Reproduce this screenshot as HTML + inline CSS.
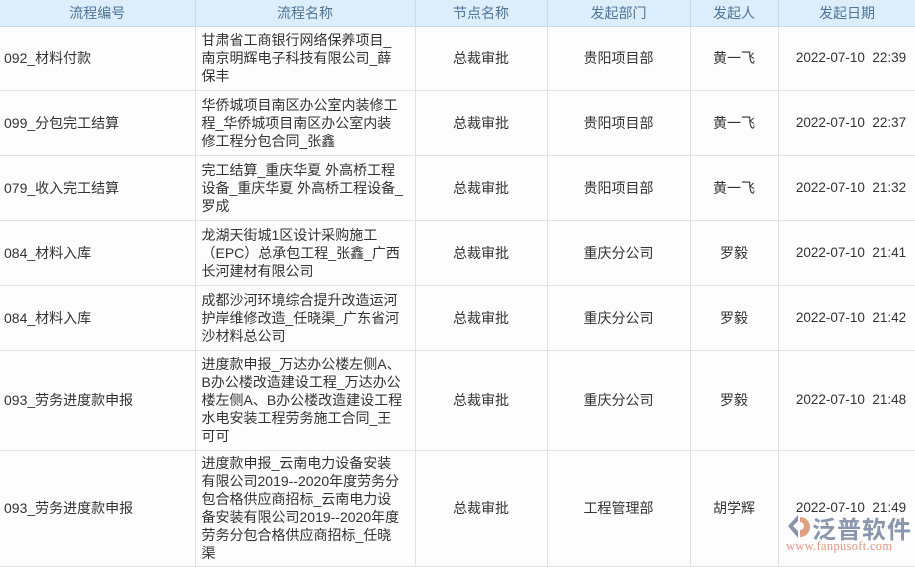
<!DOCTYPE html>
<html><head><meta charset="utf-8"><style>
*{margin:0;padding:0;box-sizing:border-box}
body{width:915px;height:561px;overflow:hidden;background:#fdfdfd;font-family:"Liberation Sans","Noto Sans CJK SC",sans-serif;font-size:14px;color:#333;position:relative}
table{border-collapse:collapse;table-layout:fixed;position:absolute;left:0;top:0;width:916px}
th{height:26px;background:#dcedfb;color:#4e7497;font-weight:normal;border-right:1px solid #c5dbef;border-bottom:1px solid #c5dbef;text-align:center;font-size:14px}
td{border-right:1px solid #e2e2e2;border-bottom:1px solid #e2e2e2;text-align:center;line-height:18px;vertical-align:middle;white-space:nowrap}
td.l{text-align:left;padding-left:4px}
td.n{text-align:left;padding:0 6px}
td.d{font-size:13.5px;padding-left:8px}
.logo{position:absolute;left:786px;top:514px}
</style></head><body>
<table>
<colgroup><col style="width:195px"><col style="width:220px"><col style="width:132px"><col style="width:143px"><col style="width:88px"><col style="width:138px"></colgroup>
<tr><th>流程编号</th><th>流程名称</th><th>节点名称</th><th>发起部门</th><th>发起人</th><th>发起日期</th></tr>
<tr style="height:64px"><td class="l">092_材料付款</td><td class="n">甘肃省工商银行网络保养项目_<br>南京明辉电子科技有限公司_薛<br>保丰</td><td>总裁审批</td><td>贵阳项目部</td><td>黄一飞</td><td class="d">2022-07-10&nbsp; 22:39</td></tr>
<tr style="height:65px"><td class="l">099_分包完工结算</td><td class="n">华侨城项目南区办公室内装修工<br>程_华侨城项目南区办公室内装<br>修工程分包合同_张鑫</td><td>总裁审批</td><td>贵阳项目部</td><td>黄一飞</td><td class="d">2022-07-10&nbsp; 22:37</td></tr>
<tr style="height:65px"><td class="l">079_收入完工结算</td><td class="n">完工结算_重庆华夏 外高桥工程<br>设备_重庆华夏 外高桥工程设备_<br>罗成</td><td>总裁审批</td><td>贵阳项目部</td><td>黄一飞</td><td class="d">2022-07-10&nbsp; 21:32</td></tr>
<tr style="height:65px"><td class="l">084_材料入库</td><td class="n">龙湖天街城1区设计采购施工<br>（EPC）总承包工程_张鑫_广西<br>长河建材有限公司</td><td>总裁审批</td><td>重庆分公司</td><td>罗毅</td><td class="d">2022-07-10&nbsp; 21:41</td></tr>
<tr style="height:65px"><td class="l">084_材料入库</td><td class="n">成都沙河环境综合提升改造运河<br>护岸维修改造_任晓渠_广东省河<br>沙材料总公司</td><td>总裁审批</td><td>重庆分公司</td><td>罗毅</td><td class="d">2022-07-10&nbsp; 21:42</td></tr>
<tr style="height:100px"><td class="l">093_劳务进度款申报</td><td class="n">进度款申报_万达办公楼左侧A、<br>B办公楼改造建设工程_万达办公<br>楼左侧A、B办公楼改造建设工程<br>水电安装工程劳务施工合同_王<br>可可</td><td>总裁审批</td><td>重庆分公司</td><td>罗毅</td><td class="d">2022-07-10&nbsp; 21:48</td></tr>
<tr style="height:116px"><td class="l">093_劳务进度款申报</td><td class="n">进度款申报_云南电力设备安装<br>有限公司2019--2020年度劳务分<br>包合格供应商招标_云南电力设<br>备安装有限公司2019--2020年度<br>劳务分包合格供应商招标_任晓<br>渠</td><td>总裁审批</td><td>工程管理部</td><td>胡学辉</td><td class="d">2022-07-10&nbsp; 21:49</td></tr>
</table>
<div class="logo">
<svg width="24" height="26" style="position:absolute;left:0;top:0"><path d="M12 1 L2 12 L12 24 L12 17 L7 12 L12 7Z" fill="#8a96ad"/><path d="M14 3 A10 10 0 0 1 14 23 L14 16 A4 4 0 0 0 14 8Z" fill="#e0a085"/></svg>
<div style="position:absolute;left:26px;top:-4px;font-size:24px;color:#8a96ad;white-space:nowrap;font-weight:bold;letter-spacing:1px">泛普软件</div>
<div style="position:absolute;left:0px;top:25px;font-size:12.5px;color:#e09a80;font-family:'Liberation Serif',serif;white-space:nowrap;letter-spacing:0.3px">www.fanpusoft.com</div>
</div>
</body></html>
